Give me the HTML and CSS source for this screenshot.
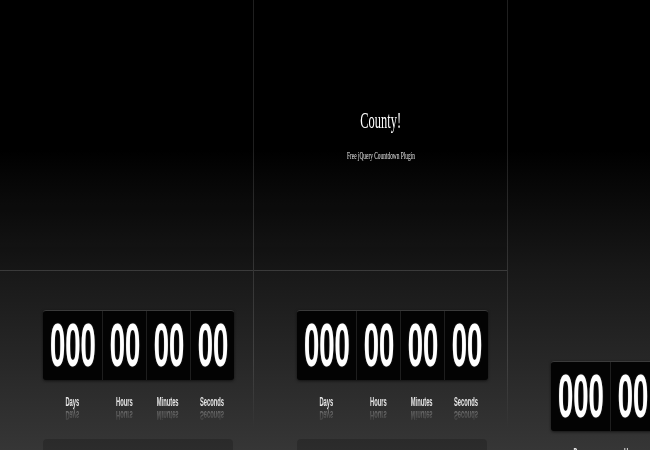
FILE: index.html
```html
<!DOCTYPE html>
<html>
<head>
<meta charset="utf-8">
<title>County!</title>
<link rel="stylesheet" href="styles.css">
</head>
<body>
<div class="page">
  <section class="col">
    <div class="hero"></div>
    <div class="stage">
      <div class="counter">
        <div class="seg seg-days"><span class="num">000</span></div>
        <div class="seg"><span class="num">00</span></div>
        <div class="seg"><span class="num">00</span></div>
        <div class="seg"><span class="num">00</span></div>
      </div>
      <div class="labels">
        <div class="lab lab-days"><span>Days</span></div>
        <div class="lab"><span>Hours</span></div>
        <div class="lab"><span>Minutes</span></div>
        <div class="lab"><span>Seconds</span></div>
      </div>
      <div class="labels reflect">
        <div class="lab lab-days"><span>Days</span></div>
        <div class="lab"><span>Hours</span></div>
        <div class="lab"><span>Minutes</span></div>
        <div class="lab"><span>Seconds</span></div>
      </div>
      <div class="shelf"></div>
    </div>
  </section>
  <section class="col">
    <div class="hero hero-title">
      <h1 class="title">County!</h1>
      <p class="subtitle">Free jQuery Countdown Plugin</p>
    </div>
    <div class="stage">
      <div class="counter">
        <div class="seg seg-days"><span class="num">000</span></div>
        <div class="seg"><span class="num">00</span></div>
        <div class="seg"><span class="num">00</span></div>
        <div class="seg"><span class="num">00</span></div>
      </div>
      <div class="labels">
        <div class="lab lab-days"><span>Days</span></div>
        <div class="lab"><span>Hours</span></div>
        <div class="lab"><span>Minutes</span></div>
        <div class="lab"><span>Seconds</span></div>
      </div>
      <div class="labels reflect">
        <div class="lab lab-days"><span>Days</span></div>
        <div class="lab"><span>Hours</span></div>
        <div class="lab"><span>Minutes</span></div>
        <div class="lab"><span>Seconds</span></div>
      </div>
      <div class="shelf"></div>
    </div>
  </section>
  <section class="col col-shift">
    <div class="hero"></div>
    <div class="stage">
      <div class="counter">
        <div class="seg seg-days"><span class="num">000</span></div>
        <div class="seg"><span class="num">00</span></div>
        <div class="seg"><span class="num">00</span></div>
        <div class="seg"><span class="num">00</span></div>
      </div>
      <div class="labels">
        <div class="lab lab-days"><span>Days</span></div>
        <div class="lab"><span>Hours</span></div>
        <div class="lab"><span>Minutes</span></div>
        <div class="lab"><span>Seconds</span></div>
      </div>
    </div>
  </section>
</div>
</body>
</html>
```

FILE: styles.css
```css
html, body {
  margin: 0;
  padding: 0;
  width: 650px;
  height: 450px;
  overflow: hidden;
}

body {
  background: linear-gradient(to bottom,
    #000 0px, #000 150px, #181818 270px, #363636 450px);
  font-family: "Liberation Sans", Arial, sans-serif;
}

.page {
  display: flex;
  height: 450px;
  overflow: hidden;
}

.col {
  flex: 0 0 254px;
  min-width: 0;
  box-sizing: border-box;
  height: 450px;
  border-style: solid;
  border-width: 0 1px 0 0;
  border-image: linear-gradient(to bottom,
    rgba(255,255,255,0.12) 0%, rgba(255,255,255,0.12) 80%, rgba(255,255,255,0) 95%) 1;
}

.hero {
  box-sizing: border-box;
  height: 271px;
  border-bottom: 1px solid rgba(255,255,255,0.15);
  background: linear-gradient(to bottom, rgba(0,0,0,0) 60%, rgba(0,0,0,0.1) 100%);
}

.col-shift .hero {
  height: 322px;
  border-bottom: 0;
  background: none;
}

.hero-title {
  display: flex;
  flex-direction: column;
  align-items: center;
  padding-top: 109px;
}

.title {
  margin: 0;
  font-family: "Liberation Serif", "Times New Roman", serif;
  font-weight: normal;
  font-size: 23px;
  line-height: 23px;
  color: #fff;
  white-space: nowrap;
  transform: scaleX(0.54);
}

.subtitle {
  margin: 19px 0 0;
  font-family: "Liberation Serif", "Times New Roman", serif;
  font-size: 10px;
  line-height: 10px;
  color: #e6e6e6;
  white-space: nowrap;
  transform: scaleX(0.54);
}

.stage {
  padding: 39px 0 0 43px;
}

.counter {
  display: flex;
  width: 191px;
  height: 69px;
  background: #030303;
  border-top: 1px solid #3a3a3a;
  border-radius: 3px;
  box-shadow: 0 1px 3px rgba(0,0,0,0.6);
  overflow: hidden;
}

.seg {
  flex: 0 0 44px;
  min-width: 0;
  box-sizing: border-box;
  display: flex;
  align-items: center;
  justify-content: center;
}

.seg + .seg {
  border-left: 1px solid #1e1e1e;
}

.seg-days {
  flex-basis: 59px;
}

.num {
  flex: none;
  display: inline-block;
  font-family: "Liberation Sans", Arial, sans-serif;
  font-weight: bold;
  font-size: 61px;
  line-height: 61px;
  color: #fff;
  white-space: nowrap;
  transform: scaleX(0.45);
  text-shadow: 0 0 2px rgba(255,255,255,0.35);
}

.labels {
  display: flex;
  width: 191px;
  margin-top: 16px;
}

.lab {
  flex: 0 0 44px;
  min-width: 0;
  display: flex;
  justify-content: center;
  font-weight: bold;
  font-size: 12px;
  line-height: 12px;
  color: #e6e6e6;
  white-space: nowrap;
}

.lab-days {
  flex-basis: 59px;
}

.lab span {
  flex: none;
  display: inline-block;
  transform: scaleX(0.48);
}

.reflect {
  margin-top: 1px;
  -webkit-mask-image: linear-gradient(to bottom, rgba(0,0,0,1) 0%, rgba(0,0,0,0.15) 100%);
  mask-image: linear-gradient(to bottom, rgba(0,0,0,1) 0%, rgba(0,0,0,0.15) 100%);
}

.reflect .lab {
  color: #7a7a7a;
}

.reflect .lab span {
  transform: scaleX(0.48) scaleY(-1);
}

.shelf {
  width: 190px;
  height: 40px;
  margin-top: 18px;
  background: rgba(0,0,0,0.18);
  border-radius: 4px;
}
```
